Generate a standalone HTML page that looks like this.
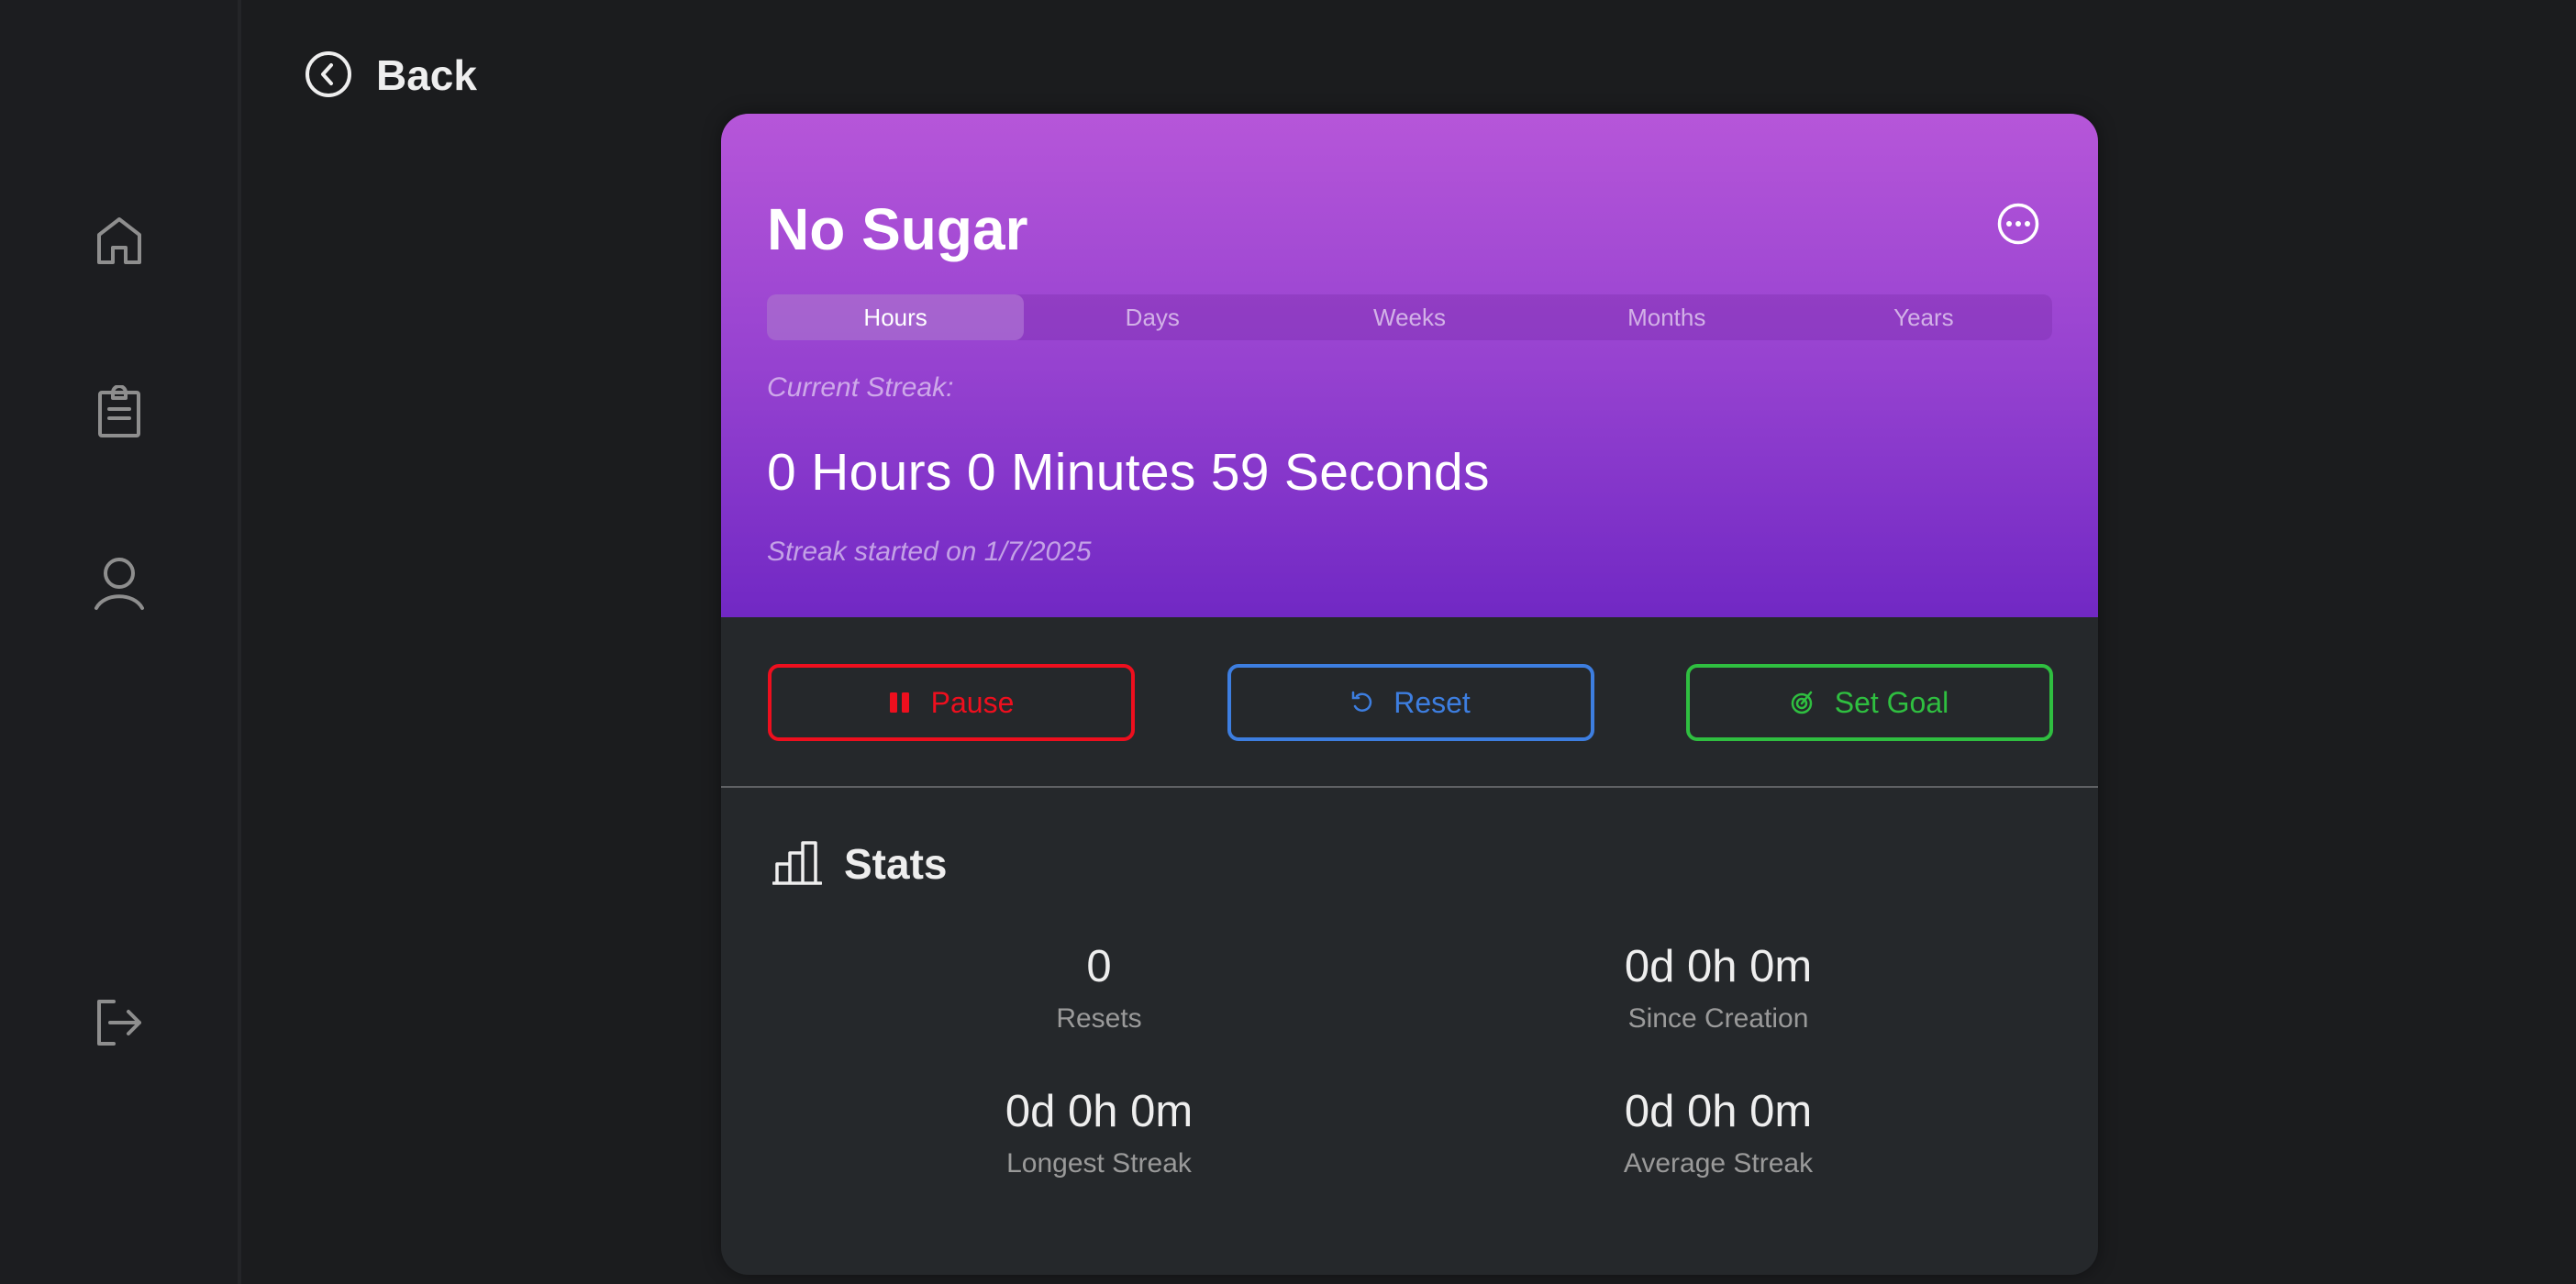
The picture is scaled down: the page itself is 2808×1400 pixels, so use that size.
<!DOCTYPE html>
<html><head><meta charset="utf-8"><style>
*{margin:0;padding:0;box-sizing:border-box}
body{width:2808px;height:1400px;background:#1b1c1e;font-family:"Liberation Sans",sans-serif;position:relative;overflow:hidden;color:#fff}
.side{position:absolute;left:0;top:0;width:263px;height:1400px;background:#1c1d20;border-right:4px solid #242528}
.abs{position:absolute}
.card{position:absolute;left:786px;top:124px;width:1501px;height:1266px;background:#25282b;border-radius:30px;overflow:hidden;box-shadow:0 0 20px rgba(0,0,0,.4)}
.head{position:absolute;left:0;top:0;width:1501px;height:549px;background:linear-gradient(180deg,#b656d9 0%,#9642d0 50%,#7128c4 100%)}
.tabs{position:absolute;left:50px;top:197px;width:1401px;height:50px;background:rgba(60,0,100,.13);border-radius:10px;display:flex}
.tabs div{flex:1;text-align:center;line-height:50px;font-size:26px;color:rgba(255,255,255,.6)}
.tabs .on{background:rgba(255,255,255,.2);color:#fff;border-radius:10px}
.btn{position:absolute;top:600px;width:400px;height:84px;border:4px solid;border-radius:12px;display:flex;align-items:center;justify-content:center;font-size:32px;gap:22px}
.val{position:absolute;width:600px;text-align:center;font-size:49px;color:#eee}
.lab{position:absolute;width:600px;text-align:center;font-size:30px;color:#9a9a9a}
</style></head><body>
<div class="side">
<svg class="abs" style="left:104px;top:236px" width="52" height="54" viewBox="0 0 52 54" fill="none" stroke="#8e8e8e" stroke-width="4" stroke-linejoin="round"><path d="M4 20 L26 3 L48 20 V50 H33 V34 H19 V50 H4 Z"/></svg>
<svg class="abs" style="left:106px;top:420px" width="48" height="58" viewBox="0 0 48 58" fill="none" stroke="#8e8e8e" stroke-width="4" stroke-linejoin="round"><rect x="3" y="8" width="42" height="47" rx="2"/><path d="M17 14 V8 a7 7 0 0 1 14 0 V14 Z"/><path d="M13 26 H35 M13 36 H35" stroke-linecap="round"/></svg>
<svg class="abs" style="left:102px;top:608px" width="56" height="58" viewBox="0 0 56 58" fill="none" stroke="#8e8e8e" stroke-width="4" stroke-linecap="round"><circle cx="28" cy="17" r="15"/><path d="M3 55 C12 38 44 38 53 55"/></svg>
<svg class="abs" style="left:104px;top:1089px" width="52" height="52" viewBox="0 0 52 52" fill="none" stroke="#8e8e8e" stroke-width="4" stroke-linecap="round" stroke-linejoin="round"><path d="M20 3 H4 V49 H20"/><path d="M16 26 H48 M36 14 L48 26 L36 38"/></svg>
</div>
<svg class="abs" style="left:332px;top:55px" width="52" height="52" viewBox="0 0 52 52" fill="none" stroke="#eee" stroke-width="4" stroke-linecap="round" stroke-linejoin="round"><circle cx="26" cy="26" r="23"/><path d="M29 16 L20 26 L29 36"/></svg>
<div class="abs" style="left:410px;top:52px;font-size:46px;font-weight:bold;color:#eee;line-height:60px">Back</div>
<div class="card">
<div class="head">
<div class="abs" style="left:50px;top:88px;font-size:64px;font-weight:bold;line-height:76px">No Sugar</div>
<svg class="abs" style="left:1391px;top:97px" width="46" height="46" viewBox="0 0 46 46"><circle cx="23" cy="23" r="20.5" fill="none" stroke="#fff" stroke-width="3.5"/><circle cx="13" cy="23" r="3" fill="#fff"/><circle cx="23" cy="23" r="3" fill="#fff"/><circle cx="33" cy="23" r="3" fill="#fff"/></svg>
<div class="tabs"><div class="on">Hours</div><div>Days</div><div>Weeks</div><div>Months</div><div>Years</div></div>
<div class="abs" style="left:50px;top:280px;font-size:30px;font-style:italic;color:rgba(255,255,255,.55);line-height:38px">Current Streak:</div>
<div class="abs" style="left:50px;top:356px;font-size:57px;line-height:70px;letter-spacing:0.3px">0 Hours 0 Minutes 59 Seconds</div>
<div class="abs" style="left:50px;top:459px;font-size:30px;font-style:italic;color:rgba(255,255,255,.55);line-height:38px">Streak started on 1/7/2025</div>
</div>
<div class="btn" style="left:51px;border-color:#ee0f1e;color:#ee0f1e"><svg width="24" height="24" viewBox="0 0 24 24"><rect x="1" y="1" width="8" height="22" rx="1.5" fill="#ee0f1e"/><rect x="14" y="1" width="8" height="22" rx="1.5" fill="#ee0f1e"/></svg>Pause</div>
<div class="btn" style="left:552px;border-color:#3d7ee0;color:#3d7ee0"><svg width="24" height="26" viewBox="0 0 24 26" fill="none" stroke="#3d7ee0" stroke-width="2.5" stroke-linecap="round"><path d="M6 6 A9 9 0 1 1 4 17"/><path d="M2 2 V8 H8"/></svg>Reset</div>
<div class="btn" style="left:1052px;border-color:#2fbf40;color:#2fbf40"><svg width="26" height="28" viewBox="0 0 26 28" fill="none" stroke="#2fbf40" stroke-width="2.5" stroke-linecap="round"><circle cx="12" cy="15" r="10"/><circle cx="12" cy="15" r="5"/><path d="M12 15 L22 3"/></svg>Set Goal</div>
<div class="abs" style="left:0;top:733px;width:1501px;height:2px;background:#5f6164"></div>
<svg class="abs" style="left:56px;top:793px" width="54" height="48" viewBox="0 0 54 48" fill="none" stroke="#eee" stroke-width="3.5" stroke-linejoin="round"><path d="M5 46 V25 H19 V46 M19 46 V13 H33 V46 M33 46 V2 H47 V46"/><path d="M1 46 H53" stroke-linecap="round"/></svg>
<div class="abs" style="left:134px;top:790px;font-size:46px;font-weight:bold;color:#eee;line-height:56px">Stats</div>
<div class="val" style="left:112px;top:902px">0</div>
<div class="lab" style="left:112px;top:970px">Resets</div>
<div class="val" style="left:787px;top:902px">0d 0h 0m</div>
<div class="lab" style="left:787px;top:970px">Since Creation</div>
<div class="val" style="left:112px;top:1060px">0d 0h 0m</div>
<div class="lab" style="left:112px;top:1128px">Longest Streak</div>
<div class="val" style="left:787px;top:1060px">0d 0h 0m</div>
<div class="lab" style="left:787px;top:1128px">Average Streak</div>
</div>
</body></html>
